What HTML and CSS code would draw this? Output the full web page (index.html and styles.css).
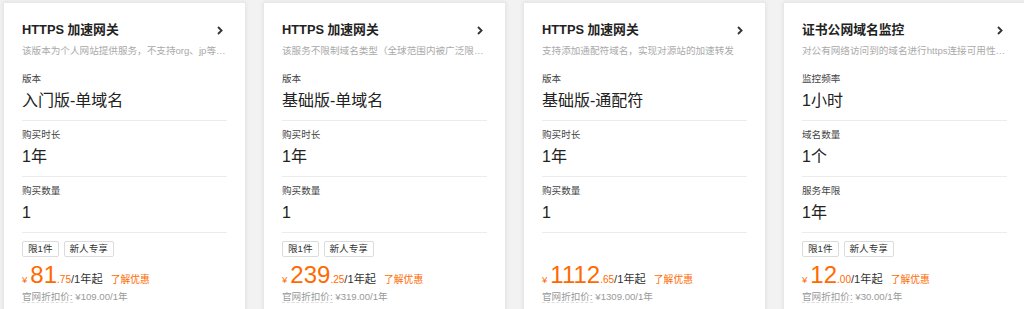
FILE: index.html
```html
<!DOCTYPE html>
<html lang="zh-CN">
<head>
    <meta charset="UTF-8">
    <meta name="viewport" content="width=device-width, initial-scale=1.0">
    <title>SSL 证书</title>
    <link rel="stylesheet" href="styles.css">
</head>
<body>
    <div class="cards">
        <div class="card">
            <div class="card-head">
                <h3 class="card-title">HTTPS 加速网关</h3>
                <svg class="arrow" width="6" height="9" viewBox="0 0 6 9"><polyline points="1,1 4.6,4.5 1,8" fill="none" stroke="#333" stroke-width="1.8"/></svg>
            </div>
            <p class="card-desc">该版本为个人网站提供服务，不支持org、jp等后缀的域名</p>
            <div class="spec">
                <div class="spec-label">版本</div>
                <div class="spec-value">入门版-单域名</div>
            </div>
            <div class="spec">
                <div class="spec-label">购买时长</div>
                <div class="spec-value">1年</div>
            </div>
            <div class="spec">
                <div class="spec-label">购买数量</div>
                <div class="spec-value">1</div>
            </div>
            <div class="tags">
                <span class="tag">限1件</span>
                <span class="tag">新人专享</span>
            </div>
            <div class="price">
                <span class="yen">¥</span><span class="num">81</span><span class="dec">.75</span><span class="unit">/1年起</span><a class="more" href="#">了解优惠</a>
            </div>
            <div class="origin"><span class="origin-label">官网折扣价:</span> ¥109.00/1年</div>
        </div>

        <div class="card">
            <div class="card-head">
                <h3 class="card-title">HTTPS 加速网关</h3>
                <svg class="arrow" width="6" height="9" viewBox="0 0 6 9"><polyline points="1,1 4.6,4.5 1,8" fill="none" stroke="#333" stroke-width="1.8"/></svg>
            </div>
            <p class="card-desc">该服务不限制域名类型（全球范围内被广泛限制的域名除外）</p>
            <div class="spec">
                <div class="spec-label">版本</div>
                <div class="spec-value">基础版-单域名</div>
            </div>
            <div class="spec">
                <div class="spec-label">购买时长</div>
                <div class="spec-value">1年</div>
            </div>
            <div class="spec">
                <div class="spec-label">购买数量</div>
                <div class="spec-value">1</div>
            </div>
            <div class="tags">
                <span class="tag">限1件</span>
                <span class="tag">新人专享</span>
            </div>
            <div class="price">
                <span class="yen">¥</span><span class="num">239</span><span class="dec">.25</span><span class="unit">/1年起</span><a class="more" href="#">了解优惠</a>
            </div>
            <div class="origin"><span class="origin-label">官网折扣价:</span> ¥319.00/1年</div>
        </div>

        <div class="card">
            <div class="card-head">
                <h3 class="card-title">HTTPS 加速网关</h3>
                <svg class="arrow" width="6" height="9" viewBox="0 0 6 9"><polyline points="1,1 4.6,4.5 1,8" fill="none" stroke="#333" stroke-width="1.8"/></svg>
            </div>
            <p class="card-desc">支持添加通配符域名，实现对源站的加速转发</p>
            <div class="spec">
                <div class="spec-label">版本</div>
                <div class="spec-value">基础版-通配符</div>
            </div>
            <div class="spec">
                <div class="spec-label">购买时长</div>
                <div class="spec-value">1年</div>
            </div>
            <div class="spec">
                <div class="spec-label">购买数量</div>
                <div class="spec-value">1</div>
            </div>
            <div class="tags"></div>
            <div class="price">
                <span class="yen">¥</span><span class="num">1112</span><span class="dec">.65</span><span class="unit">/1年起</span><a class="more" href="#">了解优惠</a>
            </div>
            <div class="origin"><span class="origin-label">官网折扣价:</span> ¥1309.00/1年</div>
        </div>

        <div class="card">
            <div class="card-head">
                <h3 class="card-title">证书公网域名监控</h3>
                <svg class="arrow" width="6" height="9" viewBox="0 0 6 9"><polyline points="1,1 4.6,4.5 1,8" fill="none" stroke="#333" stroke-width="1.8"/></svg>
            </div>
            <p class="card-desc">对公有网络访问到的域名进行https连接可用性监控</p>
            <div class="spec">
                <div class="spec-label">监控频率</div>
                <div class="spec-value">1小时</div>
            </div>
            <div class="spec">
                <div class="spec-label">域名数量</div>
                <div class="spec-value">1个</div>
            </div>
            <div class="spec">
                <div class="spec-label">服务年限</div>
                <div class="spec-value">1年</div>
            </div>
            <div class="tags">
                <span class="tag">限1件</span>
                <span class="tag">新人专享</span>
            </div>
            <div class="price">
                <span class="yen">¥</span><span class="num">12</span><span class="dec">.00</span><span class="unit">/1年起</span><a class="more" href="#">了解优惠</a>
            </div>
            <div class="origin"><span class="origin-label">官网折扣价:</span> ¥30.00/1年</div>
        </div>
    </div>
</body>
</html>
```

FILE: styles.css
```css
body {
    margin: 0;
    background: #f2f2f2;
    font-family: "Liberation Sans", "Noto Sans CJK SC", sans-serif;
    color: #333;
    overflow: hidden;
}
.cards {
    display: flex;
    gap: 17px;
    padding: 2px 0 0 3px;
}
.card {
    flex: 0 0 243px;
    width: 243px;
    min-width: 0;
    box-sizing: border-box;
    background: #fff;
    border: 1px solid #e8e8e8;
    box-shadow: 0 0 4px rgba(0, 0, 0, 0.08);
    padding: 14px 18px 20px;
}
.card-head {
    display: flex;
    justify-content: space-between;
    align-items: center;
    height: 26px;
}
.card-title {
    margin: 0;
    font-size: 12.8px;
    font-weight: bold;
    line-height: 26px;
    color: #222;
}
.arrow {/*箭头*/
    margin-right: 4px;
}
.card-desc {
    margin: 0 0 6px;
    font-size: 9.6px;
    line-height: 16px;
    color: #aaa;
    white-space: nowrap;
    overflow: hidden;
    text-overflow: ellipsis;
}
.spec {
    padding: 6px 0 5px;
    border-bottom: 1px solid #ececec;
}
.spec-label {
    font-size: 9.6px;
    line-height: 16px;
    color: #444;
}
.spec-value {
    font-size: 16px;
    line-height: 28px;
    color: #222;
}
.tags {
    display: flex;
    gap: 5px;
    height: 16px;
    margin-top: 8px;
}
.tag {
    box-sizing: border-box;
    height: 16px;
    padding: 0 5px;
    border: 1px solid #dcdcdc;
    border-radius: 2px;
    font-size: 9.6px;
    line-height: 14px;
    color: #333;
}
.price {
    display: flex;
    align-items: baseline;
    height: 28px;
    margin-top: 4px;
    color: #ff6a00;
}
.yen {
    font-size: 9.6px;
    line-height: 16px;
    margin-right: 3px;
}
.num {
    font-size: 24px;
    line-height: 28px;
}
.dec {
    font-size: 10px;
    line-height: 16px;
}
.unit {
    font-size: 11.2px;
    line-height: 16px;
    color: #333;
}
.more {
    margin-left: 8px;
    font-size: 9.8px;
    line-height: 16px;
    color: #ff6a00;
    text-decoration: none;
}
.origin {
    font-size: 9.6px;
    line-height: 16px;
    color: #999;
}
.origin-label {
    border-bottom: 1px dashed #ddd;
}
```
